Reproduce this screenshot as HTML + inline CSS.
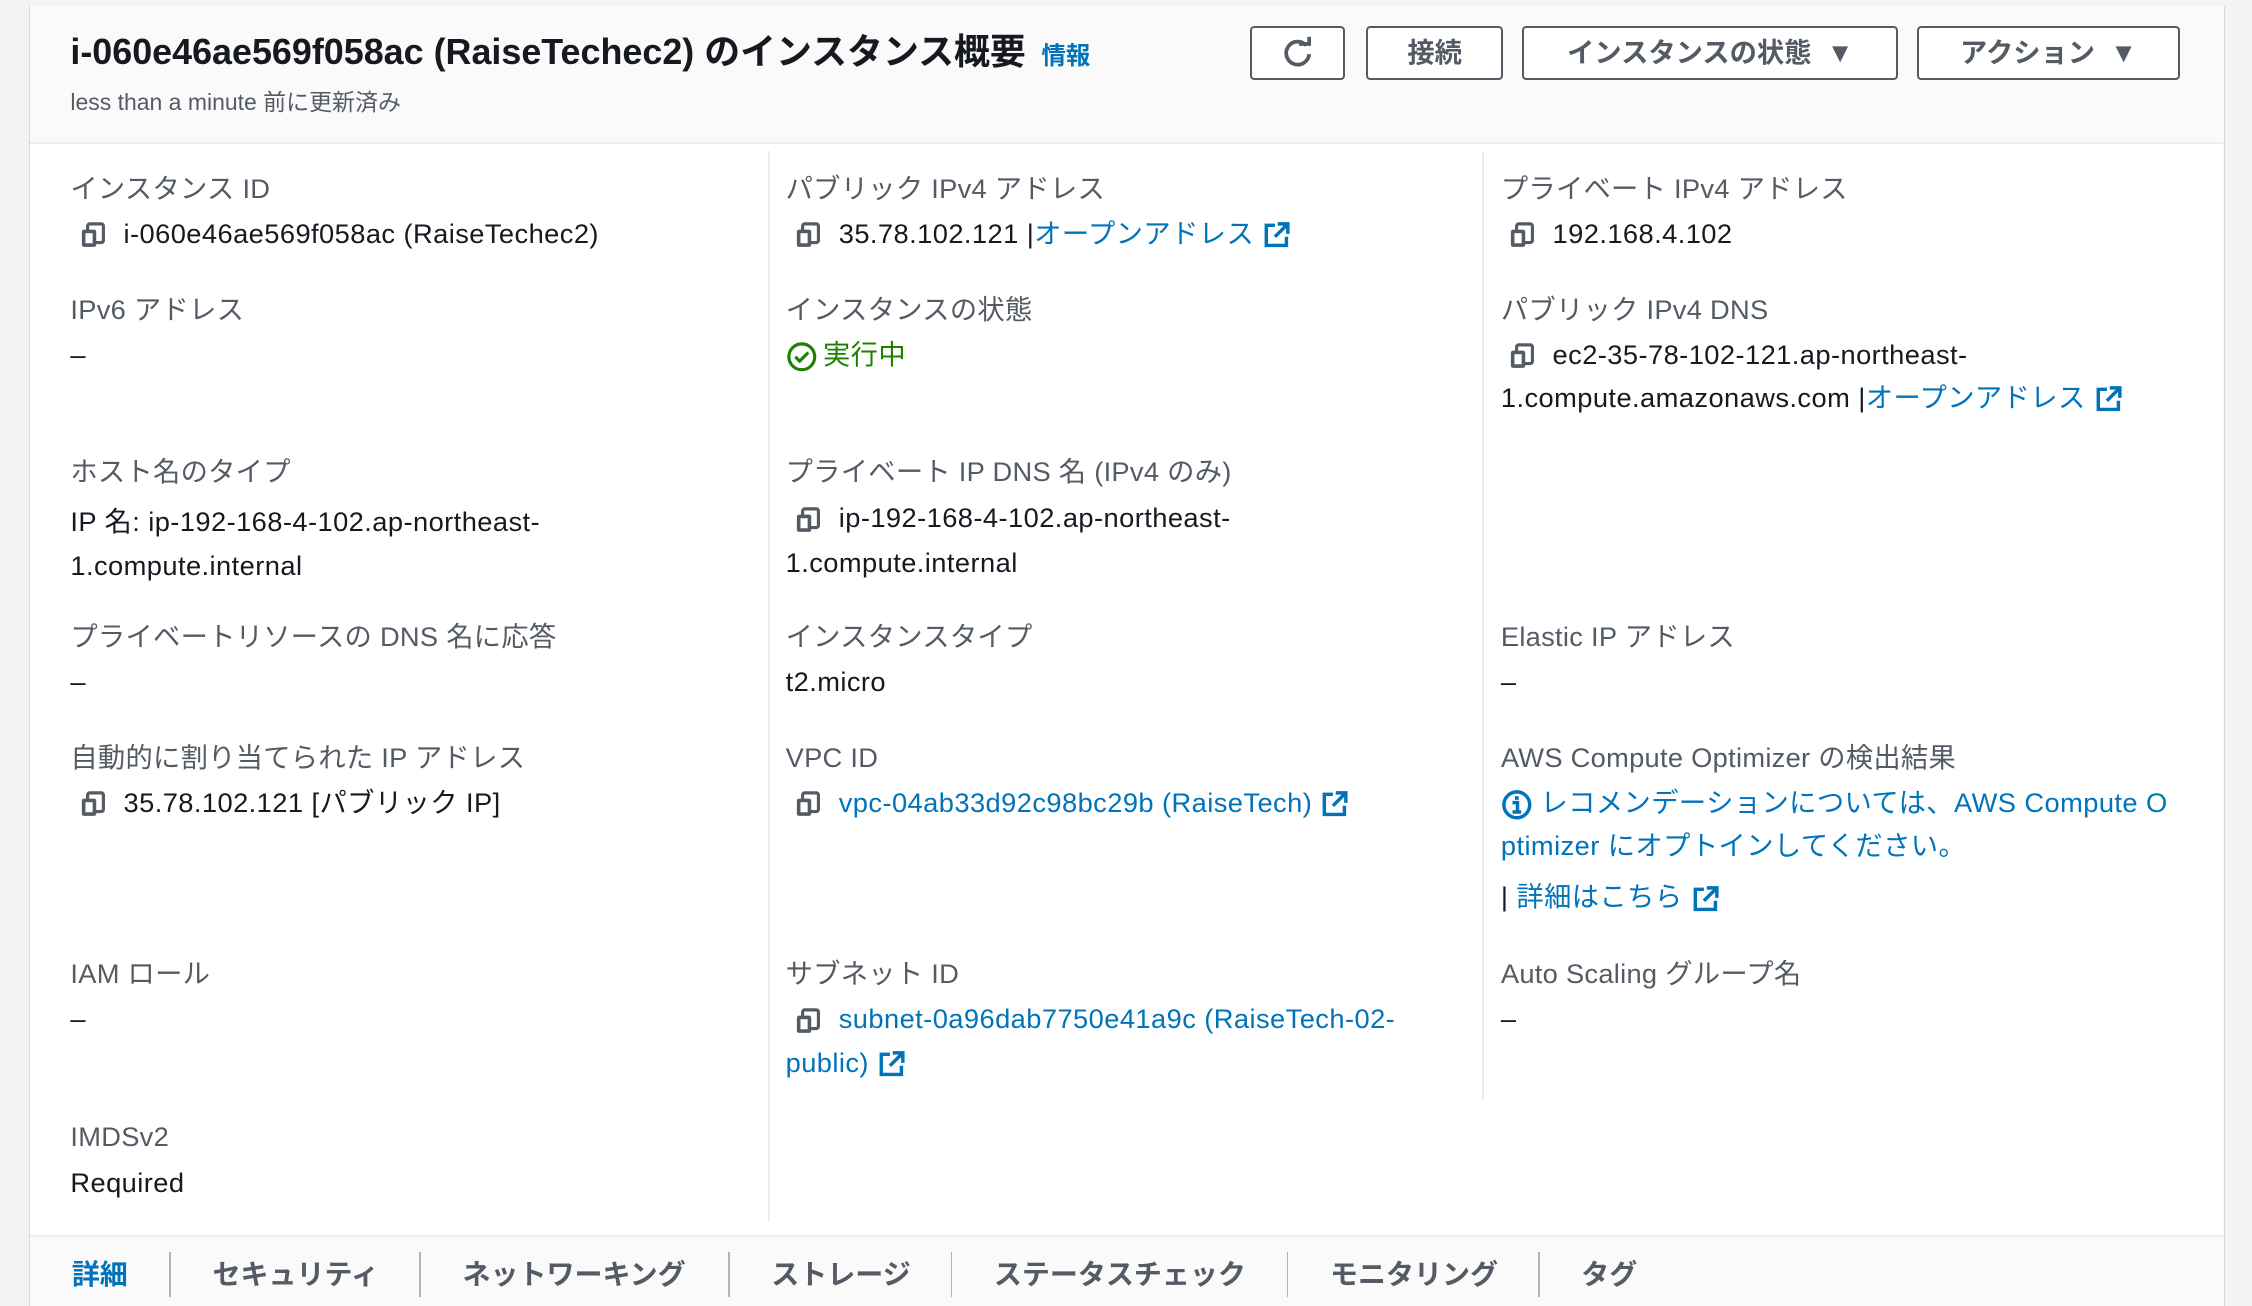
<!DOCTYPE html>
<html><head><meta charset="utf-8"><style>
html,body{margin:0;padding:0;width:2252px;height:1306px;overflow:hidden;background:#f2f3f3;}
#w{zoom:1.43622;position:relative;width:1568px;height:909.3px;font-family:"Liberation Sans","Noto Sans CJK JP",sans-serif;}
.p{position:absolute;white-space:nowrap;}
.lab{font-size:19px;color:#545b64;line-height:24px;letter-spacing:0.2px;}
.val{font-size:19px;color:#16191f;line-height:24px;letter-spacing:0.3px;}
.lnk{color:#0073bb;}
.btn{position:absolute;top:18px;height:35px;border:2px solid #545b64;border-radius:3px;background:#fff;color:#545b64;font-weight:bold;font-size:19px;line-height:35px;text-align:center;}
.tab{position:absolute;top:876px;font-size:19.5px;font-weight:bold;color:#545b64;line-height:24px;}
.sep{position:absolute;top:872px;width:1px;height:31px;background:#aab7b8;}
svg{vertical-align:middle;}
</style></head><body><div id="w">
<div style="position:absolute;left:20px;top:4px;width:1528px;height:906px;background:#fafafa;border-left:1px solid #d5dbdb;border-right:1px solid #d5dbdb;"></div>
<div style="position:absolute;left:21px;top:99px;width:1527px;height:762px;background:#fff;border-top:2px solid #eaeded;border-bottom:2px solid #eaeded;box-sizing:border-box;"></div>
<div style="position:absolute;left:535px;top:105px;width:1px;height:745px;background:#eaeded;"></div>
<div style="position:absolute;left:1032px;top:105px;width:1px;height:660px;background:#eaeded;"></div>

<div class="p" style="left:49px;top:21px;font-size:25px;font-weight:bold;color:#16191f;line-height:32px;">i-060e46ae569f058ac (RaiseTechec2) のインスタンス概要 <span style="font-size:17px;color:#0073bb;margin-left:4px;">情報</span></div>
<div class="p" style="left:49px;top:61px;font-size:16px;color:#545b64;line-height:20px;">less than a minute 前に更新済み</div>

<div class="btn" style="left:870px;width:64px;"><svg width="26" height="26" viewBox="0 0 26 26" style="margin-top:-3px"><path d="M19 8 A8 8 0 1 0 21 14" fill="none" stroke="#545b64" stroke-width="2.6"/><path d="M14 7 L21 7 L21 2" fill="none" stroke="#545b64" stroke-width="2.6"/></svg></div>
<div class="btn" style="left:951px;width:93px;">接続</div>
<div class="btn" style="left:1060px;width:259px;">インスタンスの状態 &nbsp;▼</div>
<div class="btn" style="left:1335px;width:180px;">アクション &nbsp;▼</div>

<!-- col1 -->
<div class="p lab" style="left:49px;top:120px;">インスタンス ID</div>
<div class="p val" style="left:55px;top:151px;"><svg width="20" height="20" viewBox="0 0 20 20"><rect x="6" y="2" width="11" height="13" rx="1.5" fill="none" stroke="#545b64" stroke-width="2.2"/><rect x="2" y="6" width="10" height="12" rx="1.5" fill="#545b64"/><rect x="4.5" y="8.5" width="5" height="7" fill="#fff"/></svg><span style="margin-left:11px">i-060e46ae569f058ac (RaiseTechec2)</span></div>
<div class="p lab" style="left:49px;top:204px;">IPv6 アドレス</div>
<div class="p val" style="left:49px;top:235px;">–</div>
<div class="p lab" style="left:49px;top:317px;">ホスト名のタイプ</div>
<div class="p val" style="left:49px;top:348px;line-height:31px;">IP 名: ip-192-168-4-102.ap-northeast-<br>1.compute.internal</div>
<div class="p lab" style="left:49px;top:432px;">プライベートリソースの DNS 名に応答</div>
<div class="p val" style="left:49px;top:463px;">–</div>
<div class="p lab" style="left:49px;top:516px;">自動的に割り当てられた IP アドレス</div>
<div class="p val" style="left:55px;top:547px;"><svg width="20" height="20" viewBox="0 0 20 20"><rect x="6" y="2" width="11" height="13" rx="1.5" fill="none" stroke="#545b64" stroke-width="2.2"/><rect x="2" y="6" width="10" height="12" rx="1.5" fill="#545b64"/><rect x="4.5" y="8.5" width="5" height="7" fill="#fff"/></svg><span style="margin-left:11px">35.78.102.121 [パブリック IP]</span></div>
<div class="p lab" style="left:49px;top:666px;">IAM ロール</div>
<div class="p val" style="left:49px;top:698px;">–</div>
<div class="p lab" style="left:49px;top:780px;">IMDSv2</div>
<div class="p val" style="left:49px;top:812px;">Required</div>

<!-- col2 -->
<div class="p lab" style="left:547px;top:120px;">パブリック IPv4 アドレス</div>
<div class="p val" style="left:553px;top:151px;"><svg width="20" height="20" viewBox="0 0 20 20"><rect x="6" y="2" width="11" height="13" rx="1.5" fill="none" stroke="#545b64" stroke-width="2.2"/><rect x="2" y="6" width="10" height="12" rx="1.5" fill="#545b64"/><rect x="4.5" y="8.5" width="5" height="7" fill="#fff"/></svg><span style="margin-left:11px">35.78.102.121 |<span class="lnk">オープンアドレス</span> <svg width="20" height="20" viewBox="0 0 20 20"><path d="M9 3H3v14h14v-6" fill="none" stroke="#0073bb" stroke-width="2.4"/><path d="M11 2h7v7M18 2 9 11" fill="none" stroke="#0073bb" stroke-width="2.4"/></svg></span></div>
<div class="p lab" style="left:547px;top:204px;">インスタンスの状態</div>
<div class="p val" style="left:547px;top:235px;color:#1d8102;"><svg width="22" height="22" viewBox="0 0 22 22"><circle cx="11" cy="11" r="9" fill="none" stroke="#1d8102" stroke-width="2.2"/><path d="M6.5 11l3 3 6-6" fill="none" stroke="#1d8102" stroke-width="2.2"/></svg><span style="margin-left:4px">実行中</span></div>
<div class="p lab" style="left:547px;top:317px;">プライベート IP DNS 名 (IPv4 のみ)</div>
<div class="p val" style="left:553px;top:349px;"><svg width="20" height="20" viewBox="0 0 20 20"><rect x="6" y="2" width="11" height="13" rx="1.5" fill="none" stroke="#545b64" stroke-width="2.2"/><rect x="2" y="6" width="10" height="12" rx="1.5" fill="#545b64"/><rect x="4.5" y="8.5" width="5" height="7" fill="#fff"/></svg><span style="margin-left:11px">ip-192-168-4-102.ap-northeast-</span></div>
<div class="p val" style="left:547px;top:380px;">1.compute.internal</div>
<div class="p lab" style="left:547px;top:432px;">インスタンスタイプ</div>
<div class="p val" style="left:547px;top:463px;">t2.micro</div>
<div class="p lab" style="left:547px;top:516px;">VPC ID</div>
<div class="p val" style="left:553px;top:547px;"><svg width="20" height="20" viewBox="0 0 20 20"><rect x="6" y="2" width="11" height="13" rx="1.5" fill="none" stroke="#545b64" stroke-width="2.2"/><rect x="2" y="6" width="10" height="12" rx="1.5" fill="#545b64"/><rect x="4.5" y="8.5" width="5" height="7" fill="#fff"/></svg><span class="lnk" style="margin-left:11px">vpc-04ab33d92c98bc29b (RaiseTech) <svg width="20" height="20" viewBox="0 0 20 20"><path d="M9 3H3v14h14v-6" fill="none" stroke="#0073bb" stroke-width="2.4"/><path d="M11 2h7v7M18 2 9 11" fill="none" stroke="#0073bb" stroke-width="2.4"/></svg></span></div>
<div class="p lab" style="left:547px;top:666px;">サブネット ID</div>
<div class="p val" style="left:553px;top:698px;"><svg width="20" height="20" viewBox="0 0 20 20"><rect x="6" y="2" width="11" height="13" rx="1.5" fill="none" stroke="#545b64" stroke-width="2.2"/><rect x="2" y="6" width="10" height="12" rx="1.5" fill="#545b64"/><rect x="4.5" y="8.5" width="5" height="7" fill="#fff"/></svg><span class="lnk" style="margin-left:11px">subnet-0a96dab7750e41a9c (RaiseTech-02-</span></div>
<div class="p val lnk" style="left:547px;top:728px;">public) <svg width="20" height="20" viewBox="0 0 20 20"><path d="M9 3H3v14h14v-6" fill="none" stroke="#0073bb" stroke-width="2.4"/><path d="M11 2h7v7M18 2 9 11" fill="none" stroke="#0073bb" stroke-width="2.4"/></svg></div>

<!-- col3 -->
<div class="p lab" style="left:1045px;top:120px;">プライベート IPv4 アドレス</div>
<div class="p val" style="left:1050px;top:151px;"><svg width="20" height="20" viewBox="0 0 20 20"><rect x="6" y="2" width="11" height="13" rx="1.5" fill="none" stroke="#545b64" stroke-width="2.2"/><rect x="2" y="6" width="10" height="12" rx="1.5" fill="#545b64"/><rect x="4.5" y="8.5" width="5" height="7" fill="#fff"/></svg><span style="margin-left:11px">192.168.4.102</span></div>
<div class="p lab" style="left:1045px;top:204px;">パブリック IPv4 DNS</div>
<div class="p val" style="left:1050px;top:235px;"><svg width="20" height="20" viewBox="0 0 20 20"><rect x="6" y="2" width="11" height="13" rx="1.5" fill="none" stroke="#545b64" stroke-width="2.2"/><rect x="2" y="6" width="10" height="12" rx="1.5" fill="#545b64"/><rect x="4.5" y="8.5" width="5" height="7" fill="#fff"/></svg><span style="margin-left:11px">ec2-35-78-102-121.ap-northeast-</span></div>
<div class="p val" style="left:1045px;top:265px;">1.compute.amazonaws.com |<span class="lnk">オープンアドレス</span> <svg width="20" height="20" viewBox="0 0 20 20"><path d="M9 3H3v14h14v-6" fill="none" stroke="#0073bb" stroke-width="2.4"/><path d="M11 2h7v7M18 2 9 11" fill="none" stroke="#0073bb" stroke-width="2.4"/></svg></div>
<div class="p lab" style="left:1045px;top:432px;">Elastic IP アドレス</div>
<div class="p val" style="left:1045px;top:463px;">–</div>
<div class="p lab" style="left:1045px;top:516px;">AWS Compute Optimizer の検出結果</div>
<div class="p val lnk" style="left:1045px;top:547px;"><svg width="22" height="22" viewBox="0 0 22 22"><circle cx="11" cy="11" r="9" fill="none" stroke="#0073bb" stroke-width="2.4"/><rect x="9.7" y="5" width="2.6" height="2.6" fill="#0073bb"/><path d="M8 9.5h3.5v6M8 16h6" fill="none" stroke="#0073bb" stroke-width="2.4"/></svg> レコメンデーションについては、AWS Compute O</div>
<div class="p val lnk" style="left:1045px;top:577px;">ptimizer にオプトインしてください。</div>
<div class="p val" style="left:1045px;top:613px;">| <span class="lnk">詳細はこちら <svg width="20" height="20" viewBox="0 0 20 20"><path d="M9 3H3v14h14v-6" fill="none" stroke="#0073bb" stroke-width="2.4"/><path d="M11 2h7v7M18 2 9 11" fill="none" stroke="#0073bb" stroke-width="2.4"/></svg></span></div>
<div class="p lab" style="left:1045px;top:666px;">Auto Scaling グループ名</div>
<div class="p val" style="left:1045px;top:698px;">–</div>

<!-- tabs -->
<div class="tab" style="left:50px;color:#0073bb;">詳細</div>
<div class="sep" style="left:118px"></div>
<div class="tab" style="left:148px;">セキュリティ</div>
<div class="sep" style="left:292px"></div>
<div class="tab" style="left:322px;">ネットワーキング</div>
<div class="sep" style="left:507px"></div>
<div class="tab" style="left:537px;">ストレージ</div>
<div class="sep" style="left:662px"></div>
<div class="tab" style="left:692px;">ステータスチェック</div>
<div class="sep" style="left:896px"></div>
<div class="tab" style="left:926px;">モニタリング</div>
<div class="sep" style="left:1071px"></div>
<div class="tab" style="left:1101px;">タグ</div>
</div></body></html>
